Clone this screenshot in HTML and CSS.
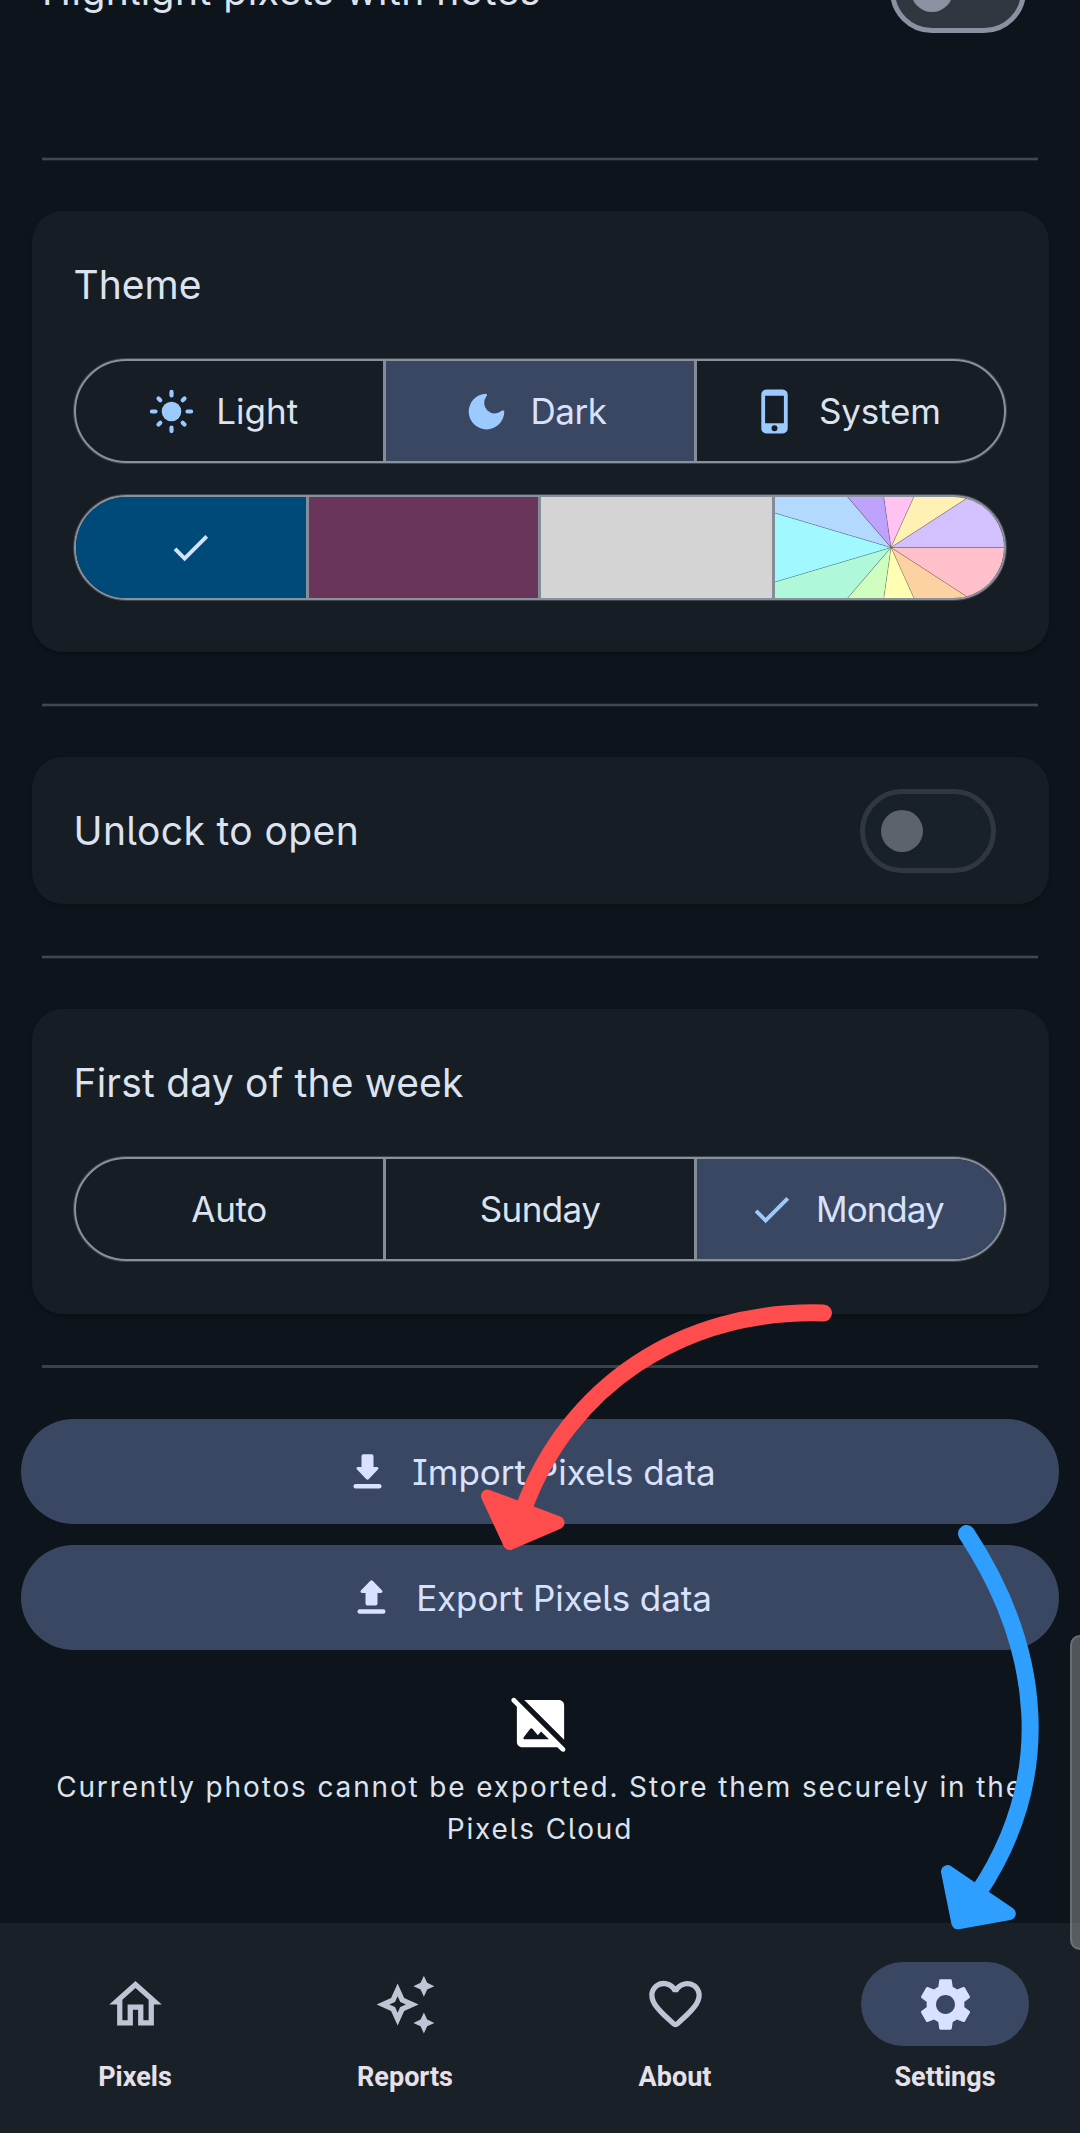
FILE: index.html
```html
<!DOCTYPE html>
<html lang="en">
<head>
<meta charset="utf-8">
<title>Settings</title>
<link rel="stylesheet" href="styles.css">
</head>
<body>
<main class="content">
  <div class="row row-top">
    <span class="heading t-highlight">Highlight pixels with notes</span>
    <span class="switch"></span>
  </div>
  <hr class="divider divider-first">
  <section class="card card-theme">
    <h2 class="heading">Theme</h2>
    <div class="segments">
      <div class="segment with-icon">
        <svg class="icon" viewBox="-23.5 -23.5 47 47" fill="#9ccaff" stroke="#9ccaff" stroke-width="4.2" stroke-linecap="round"><circle r="9.8" stroke="none"/><path d="M0-19.6V-16M0 19.6V16M-19.6 0H-16M19.6 0H16M-13-13L-11.2-11.2M13-13L11.2-11.2M-13 13L-11.2 11.2M13 13L11.2 11.2"/></svg>
        <span class="label">Light</span>
      </div>
      <div class="segment with-icon selected">
        <svg class="icon" viewBox="-23.5 -23.5 47 47" fill="#9ccaff"><path d="M-.6-17.7A17.8 17.8 0 1 0 17.8.4C17.6-1.2 16-1.1 14.9-.5A10.5 10.5 0 0 1-.2-14.9C.8-16.5.7-17.7-.6-17.7z"/></svg>
        <span class="label t-dark">Dark</span>
      </div>
      <div class="segment with-icon">
        <svg class="icon" viewBox="-23.5 -23.5 47 47" fill="#9ccaff"><path fill-rule="evenodd" d="M-8.3-22H8.3A5 5 0 0 1 13.2-17V17A5 5 0 0 1 8.3 22H-8.3A5 5 0 0 1-13.2 17V-17A5 5 0 0 1-8.3-22zM-9.4-15.7V11.8H9.4V-15.7zM0 13.8A3 3 0 1 0 0 19.8 3 3 0 1 0 0 13.8z"/></svg>
        <span class="label t-system">System</span>
      </div>
    </div>
    <div class="segments swatches">
      <div class="segment blue">
        <svg class="icon" viewBox="0 0 24 24" fill="#d1e4ff"><path d="M9 16.17L4.83 12l-1.42 1.41L9 19 21 7l-1.41-1.41z"/></svg>
      </div>
      <div class="segment plum"></div>
      <div class="segment grey"></div>
      <div class="segment">
        <svg class="wheel" viewBox="-117 -50.5 231 101" preserveAspectRatio="none" stroke="#000" stroke-opacity=".2" stroke-width=".7">
          <path fill="#ffc0cb" d="M0 0L150 0 126.2 81.1z"/>
          <path fill="#fdd2a2" d="M0 0L126.2 81.1 62.3 136.4z"/>
          <path fill="#ffffb3" d="M0 0L62.3 136.4-21.3 148.5z"/>
          <path fill="#d0fdc0" d="M0 0L-21.3 148.5-98.2 113.4z"/>
          <path fill="#aff8da" d="M0 0L-98.2 113.4-143.9 42.3z"/>
          <path fill="#a2f8ff" d="M0 0L-143.9 42.3V-42.3z"/>
          <path fill="#b3d9ff" d="M0 0L-143.9-42.3-98.2-113.4z"/>
          <path fill="#bfa2fc" d="M0 0L-98.2-113.4-21.3-148.5z"/>
          <path fill="#ffc2f2" d="M0 0L-21.3-148.5 62.3-136.4z"/>
          <path fill="#fff0b3" d="M0 0L62.3-136.4 126.2-81.1z"/>
          <path fill="#d2c1fe" d="M0 0L126.2-81.1 150 0z"/>
        </svg>
      </div>
    </div>
  </section>
  <hr class="divider">
  <section class="card card-unlock">
    <span class="heading t-unlock">Unlock to open</span>
    <span class="switch disabled"></span>
  </section>
  <hr class="divider">
  <section class="card card-week">
    <h2 class="heading t-first">First day of the week</h2>
    <div class="segments">
      <div class="segment"><span class="label t-auto">Auto</span></div>
      <div class="segment"><span class="label t-sunday">Sunday</span></div>
      <div class="segment with-icon selected">
        <svg class="icon" viewBox="0 0 24 24" fill="#9ccaff"><path d="M9 16.17L4.83 12l-1.42 1.41L9 19 21 7l-1.41-1.41z"/></svg>
        <span class="label t-monday">Monday</span>
      </div>
    </div>
  </section>
  <hr class="divider divider-last">
  <div class="actions">
    <button class="action">
      <svg class="icon" viewBox="-23.5 -23.5 47 47" fill="#d8e2ff"><path d="M-4-17.3H4Q6-17.3 6-15.3V-4.6H9.5C11.3-4.6 11.3-3 10.4-2L1.4 7.6Q0 9-1.4 7.6L-10.4-2C-11.3-3-11.3-4.6-9.5-4.6H-6V-15.3Q-6-17.3-4-17.3z"/><rect x="-14" y="12.6" width="28" height="4.4" rx="2.2"/></svg>
      <span class="label">Import Pixels data</span>
    </button>
    <button class="action">
      <svg class="icon" viewBox="-23.5 -23.5 47 47" fill="#d8e2ff"><path d="M-4 8H4Q6 8 6 6V-4.6H9.5C11.3-4.6 11.3-6.2 10.4-7.2L1.4-16.6Q0-18-1.4-16.6L-10.4-7.2C-11.3-6.2-11.3-4.6-9.5-4.6H-6V6Q-6 8-4 8z"/><rect x="-14" y="11.8" width="28" height="4.4" rx="2.2"/></svg>
      <span class="label t-export">Export Pixels data</span>
    </button>
  </div>
  <div class="notice">
    <svg class="notice-icon" viewBox="0 0 24 24" fill="#fff"><path d="M21.2 21.2L3.2 3.2 2.5 2.5C1.6 1.6.3 2.9 1.2 3.8L3 5.6V19c0 1.1.9 2 2 2h13.4l1.5 1.5C20.8 23.4 22.1 22.1 21.2 21.2zM6 18c-.5 0-.6-.4-.4-.8l2.5-3.2c.2-.3.6-.3.8 0l2.1 2.5L12.2 15l3 3zM21 18.17L5.83 3H19c1.1 0 2 .9 2 2z"/></svg>
    <p class="notice-text">Currently photos cannot be exported. Store them securely in the<br>Pixels Cloud</p>
  </div>
</main>
<nav class="tabs">
  <a class="tab"><span class="pill"><svg viewBox="0 0 24 24"><path d="M12 5.69l5 4.5V18h-2v-6H9v6H7v-7.81l5-4.5M12 3L2 12h3v8h6v-6h2v6h6v-8h3L12 3z"/></svg></span><span class="tab-label">Pixels</span></a>
  <a class="tab"><span class="pill"><svg viewBox="0 0 24 24"><path fill-rule="evenodd" d="M19 9l1.25-2.75L23 5l-2.75-1.25L19 1l-1.25 2.75L15 5l2.75 1.25L19 9zm0 6l-1.25 2.75L15 19l2.75 1.25L19 23l1.25-2.75L23 19l-2.75-1.25L19 15zM11.5 9.5L9 4 6.5 9.5 1 12l5.5 2.5L9 20l2.5-5.5L17 12l-5.5-2.5zM9.99 12.99L9 15.17l-.99-2.18L5.83 12l2.18-.99L9 8.83l.99 2.18 2.18.99-2.18.99z"/></svg></span><span class="tab-label">Reports</span></a>
  <a class="tab"><span class="pill"><svg viewBox="0 0 24 24"><path fill-rule="evenodd" d="M19.66 3.99c-2.64-1.8-5.9-.96-7.66 1.1-1.76-2.06-5.02-2.91-7.66-1.1-1.4.96-2.28 2.58-2.34 4.29-.14 3.88 3.3 6.99 8.55 11.76l.1.09c.76.69 1.93.69 2.69-.01l.11-.1c5.25-4.76 8.68-7.87 8.55-11.75-.06-1.7-.94-3.32-2.34-4.28zM12.1 18.55l-.1.1-.1-.1C7.14 14.24 4 11.39 4 8.5 4 6.5 5.5 5 7.5 5c1.54 0 3.04.99 3.57 2.36h1.87C13.46 5.99 14.96 5 16.5 5c2 0 3.5 1.5 3.5 3.5 0 2.89-3.14 5.74-7.9 10.05z"/></svg></span><span class="tab-label">About</span></a>
  <a class="tab active"><span class="pill"><svg viewBox="0 0 24 24"><path d="M19.14 12.94c.04-.3.06-.61.06-.94 0-.32-.02-.64-.07-.94l2.03-1.58c.18-.14.23-.41.12-.61l-1.92-3.32c-.12-.22-.37-.29-.59-.22l-2.39.96c-.5-.38-1.03-.7-1.62-.94l-.36-2.54c-.04-.24-.24-.41-.48-.41h-3.84c-.24 0-.43.17-.47.41l-.36 2.54c-.59.24-1.13.57-1.62.94l-2.39-.96c-.22-.08-.47 0-.59.22L2.74 8.87c-.12.21-.08.47.12.61l2.03 1.58c-.05.3-.09.63-.09.94s.02.64.07.94l-2.03 1.58c-.18.14-.23.41-.12.61l1.92 3.32c.12.22.37.29.59.22l2.39-.96c.5.38 1.03.7 1.62.94l.36 2.54c.05.24.24.41.48.41h3.84c.24 0 .44-.17.47-.41l.36-2.54c.59-.24 1.13-.56 1.62-.94l2.39.96c.22.08.47 0 .59-.22l1.92-3.32c.12-.22.07-.47-.12-.61l-2.01-1.58zM12 15.6c-1.98 0-3.6-1.62-3.6-3.6s1.62-3.6 3.6-3.6 3.6 1.62 3.6 3.6-1.62 3.6-3.6 3.6z"/></svg></span><span class="tab-label">Settings</span></a>
</nav>
<div class="scroll-handle"></div>
<svg class="arrows" viewBox="0 0 1080 2133" fill="none" stroke-linejoin="round" stroke-linecap="round">
  <g stroke="#ff4d4d"><path stroke-width="17" d="M823.5 1313C680 1309 568 1388 524 1508"/><path fill="#ff4d4d" stroke-width="13" d="M487.5 1496L558 1522.7 509.6 1543.5z"/></g>
  <g stroke="#2f9fff"><path stroke-width="17" d="M966.5 1533.5C1043 1650 1055 1778 978 1893"/><path fill="#2f9fff" stroke-width="13" d="M947.5 1871.5L1009.3 1913.7 957.8 1922.8z"/></g>
</svg>
</body>
</html>
```
FILE: styles.css
```css
* { box-sizing: border-box; }

body {
  margin: 0;
  width: 1080px;
  height: 2133px;
  position: relative;
  overflow: hidden;
  display: flex;
  flex-direction: column;
  background: #0d141b;
  color: #dce3ef;
  font-family: Inter, "Liberation Sans", sans-serif;
  font-feature-settings: "cv05", "cv08";
}

.content { flex: 1; min-height: 0; overflow: hidden; display: flex; flex-direction: column; }

.heading {
  margin: 0;
  font-size: 39px;
  font-weight: 400;
  line-height: 60px;
  color: #dce3ef;
  white-space: nowrap;
}
.t-highlight { letter-spacing: .5px; }
.t-unlock { letter-spacing: .4px; }
.t-first { letter-spacing: .2px; }

.row { display: flex; align-items: center; justify-content: space-between; }
.row-top { height: 84px; margin: -51px 54px 0 42px; flex: none; }

.switch {
  width: 136px;
  height: 84px;
  border: 5px solid #8b91a0;
  border-radius: 42px;
  background: #303740;
  display: flex;
  align-items: center;
  padding-left: 16px;
}
.switch::before { content: ""; width: 42px; height: 42px; border-radius: 50%; background: #8b91a0; }
.disabled { background: #18202a; border-color: #303740; }
.disabled::before { background: #5c636c; }

.divider {
  flex: none;
  width: 996px;
  height: 2px;
  margin: 52px auto 51px;
  border: 0;
  background: #414752;
  box-shadow: 0 -1px #1c232b, 0 1px #1c232b;
}
.divider-first { margin-top: 125px; }
.divider-last { height: 3px; margin-top: 51px; background: #3b414c; box-shadow: none; }

.card {
  flex: none;
  margin: 0 31.5px;
  padding: 44px 42px 0;
  border-radius: 31px;
  background: #161d24;
  box-shadow: 0 2px 3px rgba(0, 0, 0, .22);
}
.card-theme { height: 441px; }
.card-week { height: 305px; }
.card-unlock {
  height: 147px;
  display: flex;
  align-items: center;
  justify-content: space-between;
  padding: 0 53px 0 42px;
}

.segments {
  display: grid;
  grid-template-columns: repeat(3, 1fr);
  width: 932px;
  height: 104px;
  margin-top: 44px;
  border: 2px solid #8b919c;
  border-radius: 53px;
  box-shadow: 0 0 0 1px rgba(139, 145, 156, .35);
  overflow: hidden;
}
.segment { display: flex; align-items: center; justify-content: center; gap: 21px; min-width: 0; }
.segment + .segment { border-left: 3px solid #868c97; margin-left: -2px; }
.segment + .segment:last-child { margin-left: 0; }
.with-icon { padding-right: 11px; }
.with-icon:first-child { padding-right: 14px; }
.with-icon:last-child { padding-right: 9px; }
.selected { background: #3a4763; }
.selected .label { color: #d8e2ff; }
.swatches { grid-template-columns: repeat(4, 1fr); height: 105px; margin-top: 32px; }
.blue { background: #004a79; padding-right: 2px; }
.plum { background: #69355b; }
.grey { background: #d4d4d4; }
.wheel { width: 100%; height: 101px; }

.icon { width: 47px; height: 47px; flex: none; display: block; }
.label { font-size: 35px; line-height: 48px; white-space: nowrap; }
.t-dark { letter-spacing: -.5px; }
.t-system { letter-spacing: -.2px; }
.t-auto { letter-spacing: -.3px; margin-right: 2px; }
.t-sunday { letter-spacing: -.6px; }
.t-monday { letter-spacing: -1px; }
.t-export { letter-spacing: -.1px; }

.actions { flex: none; display: flex; flex-direction: column; gap: 21px; padding: 0 21px; }
.action {
  height: 105px;
  border: 0;
  border-radius: 53px;
  padding: 0 20px 0 0;
  background: #3a4763;
  color: #d8e2ff;
  font-family: inherit;
  font-feature-settings: inherit;
  display: flex;
  align-items: center;
  justify-content: center;
  gap: 21px;
}

.notice { flex: none; margin-top: 42px; display: flex; flex-direction: column; align-items: center; }
.notice-icon { width: 63px; height: 63px; }
.notice-text {
  margin: 11px 0 0;
  font-size: 28px;
  line-height: 42px;
  letter-spacing: 1.86px;
  text-align: center;
  white-space: nowrap;
}

.tabs { flex: none; height: 210px; display: grid; grid-template-columns: repeat(4, 1fr); background: #1a2027; }
.tab { display: flex; flex-direction: column; align-items: center; padding-top: 39px; }
.pill { width: 168px; height: 84px; border-radius: 42px; display: flex; align-items: center; justify-content: center; }
.pill svg { width: 63px; height: 63px; fill: #bec6d6; }
.active .pill { background: #3a4763; }
.active .pill svg { fill: #d8e2ff; }
.tab-label { margin-top: 14px; font: 700 27px/34px Roboto, sans-serif; color: #e6e0e9; }

.scroll-handle {
  position: absolute;
  left: 1070px;
  top: 1635px;
  width: 20px;
  height: 315px;
  border: 2px solid rgba(150, 150, 150, .4);
  border-radius: 10px;
  background: rgba(150, 150, 155, .5);
}
.arrows { position: absolute; left: 0; top: 0; width: 1080px; height: 2133px; }
```
